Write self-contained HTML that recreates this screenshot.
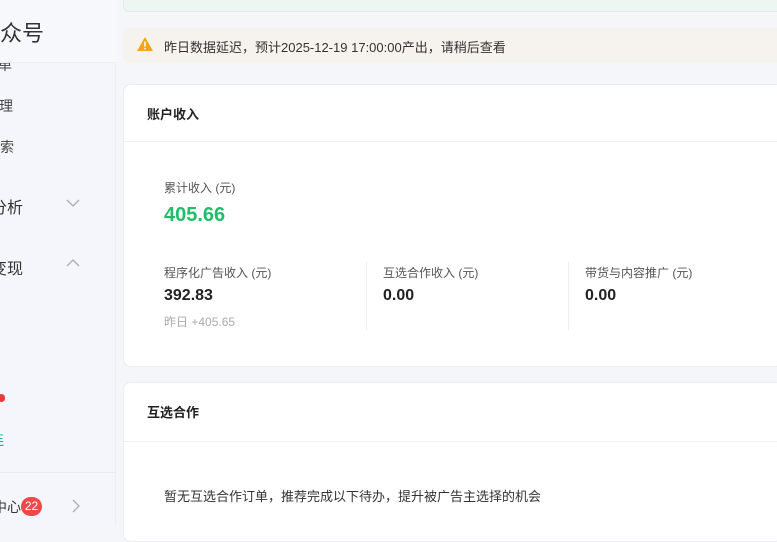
<!DOCTYPE html>
<html><head><meta charset="utf-8"><style>
*{margin:0;padding:0;box-sizing:border-box}
body{width:777px;height:525px;overflow:hidden;background:#f4f6fa;font-family:"Liberation Sans","Noto Sans CJK SC",sans-serif;position:relative;color:#1f2329}
.sb{position:absolute;left:0;top:0;width:116px;height:525px;background:#f5f6fb;border-right:1px solid #eceef3}
.sbh{position:absolute;left:0;top:0;width:116px;height:63px;background:#f7f8fb;border-bottom:1px solid #eceef2}
.t{position:absolute;white-space:nowrap}
.card{position:absolute;left:123px;width:660px;background:#fff;border:1px solid #eaedf1;border-radius:8px}
</style></head><body>
<div class="sb"></div>
<div class="sbh"></div>
<div class="t" style="left:-22px;top:16px;font-size:22px;color:#333">公众号</div>
<div class="t" style="left:-16px;top:55px;font-size:14px;color:#444;height:18px;overflow:hidden;clip-path:inset(8px 0 0 0)">菜单</div>
<div class="t" style="left:-15px;top:96px;font-size:14px;color:#444">管理</div>
<div class="t" style="left:-14px;top:137px;font-size:14px;color:#444">搜索</div>
<div class="t" style="left:-9px;top:194px;font-size:16px;color:#333">分析</div>
<svg class="t" style="left:66px;top:198px" width="14" height="10"><path d="M1 2l6 6 6-6" fill="none" stroke="#aab" stroke-width="1.3"/></svg>
<div class="t" style="left:-9px;top:255px;font-size:16px;color:#333">变现</div>
<svg class="t" style="left:66px;top:258px" width="14" height="10"><path d="M1 8l6-6 6 6" fill="none" stroke="#aab" stroke-width="1.3"/></svg>
<div class="t" style="left:-2px;top:394px;width:7px;height:8px;border-radius:4px;background:#e83a3a"></div>
<div class="t" style="left:-10px;top:430px;font-size:14px;color:#17b597">连</div>
<div style="position:absolute;left:0;top:472px;width:116px;height:1px;background:#e9ebef"></div>
<div class="t" style="left:-7px;top:497px;font-size:14px;color:#333">中心</div>
<div class="t" style="left:21px;top:497px;width:21px;height:19px;border-radius:10px;background:#f04848;color:#fff;font-size:12px;text-align:center;line-height:19px">22</div>
<svg class="t" style="left:71px;top:499px" width="10" height="14"><path d="M2 1l6 6-6 6" fill="none" stroke="#aab" stroke-width="1.3"/></svg>

<div class="t" style="left:123px;top:-8px;width:660px;height:20px;background:#eef6f3;border:1px solid #e0ece6;border-radius:6px"></div>
<div class="t" style="left:123px;top:28px;width:660px;height:35px;background:#f6f2ed;border-radius:6px"></div>
<svg class="t" style="left:136px;top:36px" width="18" height="16"><path d="M9 1L17 15H1Z" fill="#f2a515"/><rect x="8.2" y="5.5" width="1.6" height="5" fill="#fff"/><rect x="8.2" y="11.8" width="1.6" height="1.6" fill="#fff"/></svg>
<div class="t" style="left:164px;top:37px;font-size:13px;color:#333">昨日数据延迟，预计2025-12-19 17:00:00产出，请稍后查看</div>

<div class="card" style="top:84px;height:283px"></div>
<div style="position:absolute;left:124px;top:141px;width:660px;height:1px;background:#eef0f3"></div>
<div class="t" style="left:147px;top:104px;font-size:13px;font-weight:bold;color:#222">账户收入</div>
<div class="t" style="left:164px;top:179px;font-size:12px;color:#555">累计收入 (元)</div>
<div class="t" style="left:164px;top:204px;font-size:20px;font-weight:bold;color:#1fbf6a">405.66</div>
<div class="t" style="left:164px;top:264px;font-size:12px;color:#555">程序化广告收入 (元)</div>
<div class="t" style="left:164px;top:287px;font-size:16px;font-weight:bold;color:#222">392.83</div>
<div class="t" style="left:164px;top:313px;font-size:12px;color:#aaa">昨日 +405.65</div>
<div style="position:absolute;left:366px;top:262px;width:1px;height:68px;background:#eceef1"></div>
<div class="t" style="left:383px;top:264px;font-size:12px;color:#555">互选合作收入 (元)</div>
<div class="t" style="left:383px;top:287px;font-size:16px;font-weight:bold;color:#222">0.00</div>
<div style="position:absolute;left:568px;top:262px;width:1px;height:68px;background:#eceef1"></div>
<div class="t" style="left:585px;top:264px;font-size:12px;color:#555">带货与内容推广 (元)</div>
<div class="t" style="left:585px;top:287px;font-size:16px;font-weight:bold;color:#222">0.00</div>

<div class="card" style="top:382px;height:160px"></div>
<div style="position:absolute;left:124px;top:441px;width:660px;height:1px;background:#eef0f3"></div>
<div class="t" style="left:147px;top:402px;font-size:13px;font-weight:bold;color:#222">互选合作</div>
<div class="t" style="left:164px;top:486px;font-size:13px;color:#333">暂无互选合作订单，推荐完成以下待办，提升被广告主选择的机会</div>
</body></html>
